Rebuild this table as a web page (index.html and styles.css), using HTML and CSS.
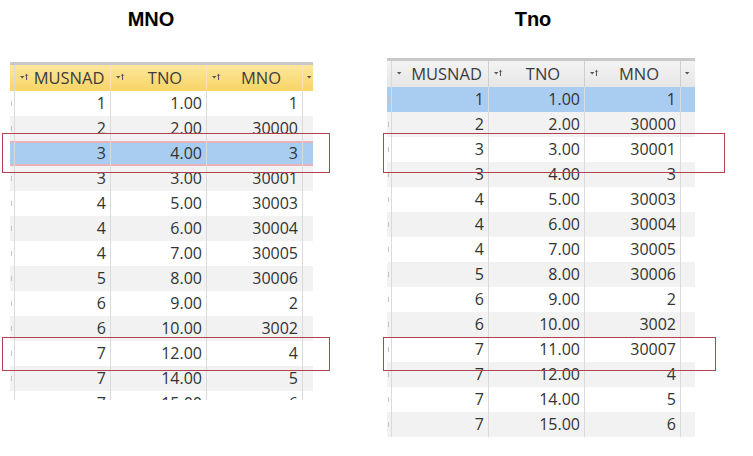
FILE: index.html
```html
<!DOCTYPE html>
<html>
<head>
<meta charset="utf-8">
<link rel="stylesheet" href="styles.css">
</head>
<body>
<div class="page">
  <section class="panel panel-left">
    <h2 class="title title-left">MNO</h2>
    <div class="grid grid-left">
      <div class="row head head-yellow">
        <div class="c sel"></div>
        <div class="c h"><svg class="ic" width="9" height="8" viewBox="0 0 9 8"><path d="M0 3h4.4L2.2 5.4z" fill="#555"/><path d="M6.5 7V1.3M5.2 2.6 6.5 1.3 7.8 2.6" stroke="#555" fill="none"/></svg><span>MUSNAD</span></div>
        <div class="c h"><svg class="ic" width="9" height="8" viewBox="0 0 9 8"><path d="M0 3h4.4L2.2 5.4z" fill="#555"/><path d="M6.5 7V1.3M5.2 2.6 6.5 1.3 7.8 2.6" stroke="#555" fill="none"/></svg><span>TNO</span></div>
        <div class="c h"><svg class="ic" width="9" height="8" viewBox="0 0 9 8"><path d="M0 3h4.4L2.2 5.4z" fill="#555"/><path d="M6.5 7V1.3M5.2 2.6 6.5 1.3 7.8 2.6" stroke="#555" fill="none"/></svg><span>MNO</span></div>
        <div class="c h x"><svg class="ic" width="5" height="8" viewBox="0 0 5 8"><path d="M0 3h4.4L2.2 5.4z" fill="#555"/></svg></div>
      </div>
      <div class="row"><div class="c sel"></div><div class="c n">1</div><div class="c n">1.00</div><div class="c n">1</div><div class="c x"></div></div>
      <div class="row"><div class="c sel"></div><div class="c n">2</div><div class="c n">2.00</div><div class="c n">30000</div><div class="c x"></div></div>
      <div class="row active marked"><div class="c sel"></div><div class="c n">3</div><div class="c n">4.00</div><div class="c n">3</div><div class="c x"></div></div>
      <div class="row"><div class="c sel"></div><div class="c n">3</div><div class="c n">3.00</div><div class="c n">30001</div><div class="c x"></div></div>
      <div class="row"><div class="c sel"></div><div class="c n">4</div><div class="c n">5.00</div><div class="c n">30003</div><div class="c x"></div></div>
      <div class="row"><div class="c sel"></div><div class="c n">4</div><div class="c n">6.00</div><div class="c n">30004</div><div class="c x"></div></div>
      <div class="row"><div class="c sel"></div><div class="c n">4</div><div class="c n">7.00</div><div class="c n">30005</div><div class="c x"></div></div>
      <div class="row"><div class="c sel"></div><div class="c n">5</div><div class="c n">8.00</div><div class="c n">30006</div><div class="c x"></div></div>
      <div class="row"><div class="c sel"></div><div class="c n">6</div><div class="c n">9.00</div><div class="c n">2</div><div class="c x"></div></div>
      <div class="row"><div class="c sel"></div><div class="c n">6</div><div class="c n">10.00</div><div class="c n">3002</div><div class="c x"></div></div>
      <div class="row"><div class="c sel"></div><div class="c n">7</div><div class="c n">12.00</div><div class="c n">4</div><div class="c x"></div></div>
      <div class="row"><div class="c sel"></div><div class="c n">7</div><div class="c n">14.00</div><div class="c n">5</div><div class="c x"></div></div>
      <div class="row"><div class="c sel"></div><div class="c n">7</div><div class="c n">15.00</div><div class="c n">6</div><div class="c x"></div></div>
    </div>
  </section>

  <section class="panel panel-right">
    <h2 class="title title-right">Tno</h2>
    <div class="grid grid-right">
      <div class="row head head-gray">
        <div class="c sel"></div>
        <div class="c h"><svg class="ic" width="9" height="8" viewBox="0 0 9 8"><path d="M0 3h4.4L2.2 5.4z" fill="#555"/></svg><span>MUSNAD</span></div>
        <div class="c h"><svg class="ic" width="9" height="8" viewBox="0 0 9 8"><path d="M0 3h4.4L2.2 5.4z" fill="#555"/><path d="M6.5 7V1.3M5.2 2.6 6.5 1.3 7.8 2.6" stroke="#555" fill="none"/></svg><span>TNO</span></div>
        <div class="c h"><svg class="ic" width="9" height="8" viewBox="0 0 9 8"><path d="M0 3h4.4L2.2 5.4z" fill="#555"/><path d="M6.5 7V1.3M5.2 2.6 6.5 1.3 7.8 2.6" stroke="#555" fill="none"/></svg><span>MNO</span></div>
        <div class="c h x"><svg class="ic" width="5" height="8" viewBox="0 0 5 8"><path d="M0 3h4.4L2.2 5.4z" fill="#555"/></svg></div>
      </div>
      <div class="row active"><div class="c sel"></div><div class="c n">1</div><div class="c n">1.00</div><div class="c n">1</div><div class="c x"></div></div>
      <div class="row"><div class="c sel"></div><div class="c n">2</div><div class="c n">2.00</div><div class="c n">30000</div><div class="c x"></div></div>
      <div class="row"><div class="c sel"></div><div class="c n">3</div><div class="c n">3.00</div><div class="c n">30001</div><div class="c x"></div></div>
      <div class="row"><div class="c sel"></div><div class="c n">3</div><div class="c n">4.00</div><div class="c n">3</div><div class="c x"></div></div>
      <div class="row"><div class="c sel"></div><div class="c n">4</div><div class="c n">5.00</div><div class="c n">30003</div><div class="c x"></div></div>
      <div class="row"><div class="c sel"></div><div class="c n">4</div><div class="c n">6.00</div><div class="c n">30004</div><div class="c x"></div></div>
      <div class="row"><div class="c sel"></div><div class="c n">4</div><div class="c n">7.00</div><div class="c n">30005</div><div class="c x"></div></div>
      <div class="row"><div class="c sel"></div><div class="c n">5</div><div class="c n">8.00</div><div class="c n">30006</div><div class="c x"></div></div>
      <div class="row"><div class="c sel"></div><div class="c n">6</div><div class="c n">9.00</div><div class="c n">2</div><div class="c x"></div></div>
      <div class="row"><div class="c sel"></div><div class="c n">6</div><div class="c n">10.00</div><div class="c n">3002</div><div class="c x"></div></div>
      <div class="row"><div class="c sel"></div><div class="c n">7</div><div class="c n">11.00</div><div class="c n">30007</div><div class="c x"></div></div>
      <div class="row"><div class="c sel"></div><div class="c n">7</div><div class="c n">12.00</div><div class="c n">4</div><div class="c x"></div></div>
      <div class="row"><div class="c sel"></div><div class="c n">7</div><div class="c n">14.00</div><div class="c n">5</div><div class="c x"></div></div>
      <div class="row"><div class="c sel"></div><div class="c n">7</div><div class="c n">15.00</div><div class="c n">6</div><div class="c x"></div></div>
    </div>
  </section>

  <div class="mark mark-1"></div>
  <div class="mark mark-2"></div>
  <div class="mark mark-3"></div>
  <div class="mark mark-4"></div>
</div>
</body>
</html>
```
FILE: styles.css
```css
* { box-sizing: border-box; }
html, body { margin: 0; padding: 0; background: #fff; }
.page {
  position: relative;
  width: 753px;
  height: 456px;
  display: flex;
  align-items: flex-start;
  overflow: hidden;
}
.panel { display: flex; flex-direction: column; }
.panel-left { margin-left: 10px; width: 303px; }
.panel-right { margin-left: 74px; width: 308px; }

.title {
  margin: 0;
  padding-top: 9px;
  height: 29px;
  font: bold 20px/20px "Liberation Sans", Arial, sans-serif;
  color: #000;
  text-align: center;
}
.title-left { padding-right: 21px; }
.title-right { padding-right: 16px; }

.grid {
  font-family: "Open Sans", "Noto Sans", sans-serif;
  font-size: 16px;
  color: #333;
  border-top: 3px solid #c8c8c8;
}
.grid-left { margin-top: 33px; height: 338px; overflow: hidden; }
.grid-right { margin-top: 29px; }

.row {
  display: grid;
  height: 25px;
  background: #fff;
}
.grid-left .row { grid-template-columns: 5px 96px 96px 96px 10px; }
.grid-right .row { grid-template-columns: 5px 97px 96px 96px 14px; }
.row:nth-child(odd) { background: #f2f2f2; }
.row.head { height: 26px; }
.head-yellow { background: linear-gradient(#fde79f, #f8d464) !important; }
.head-gray { background: linear-gradient(#f3f3f3, #e6e6e6) !important; }
.row.active { background: #a8cdf1; }
.row.marked { box-shadow: inset 0 2px 0 #e9b1ba, inset 0 -2px 0 #e9b1ba; }

.c {
  border-right: 1px solid #dadada;
  line-height: 25px;
  white-space: nowrap;
  overflow: hidden;
}
.c.x { border-right: 0; }
.c.sel { position: relative; }
.row:not(.head) .c.sel::before {
  content: "";
  position: absolute;
  left: 1px;
  top: 10px;
  width: 1px;
  height: 5px;
  background: #c4c4c4;
}
.n { text-align: right; padding-right: 4px; }
.h {
  display: flex;
  align-items: center;
  padding-left: 5px;
  line-height: 26px;
  font-size: 16.5px;
  color: #3c3c3c;
}
.head-yellow .h { border-right-color: #f4e6b8; }
.head-gray .h { border-right-color: #cfcfcf; }
.h span { flex: 1; text-align: center; padding-right: 1px; }
.ic { flex: none; margin-top: -2px; }
.h.x { padding-left: 4px; }

.mark {
  position: absolute;
  border: 1px solid #b3424f;
}
.mark-1 { left: 2px; top: 133px; width: 328px; height: 40px; }
.mark-2 { left: 2px; top: 337px; width: 328px; height: 34px; }
.mark-3 { left: 383px; top: 133px; width: 342px; height: 40px; }
.mark-4 { left: 383px; top: 337px; width: 333px; height: 34px; }
```
